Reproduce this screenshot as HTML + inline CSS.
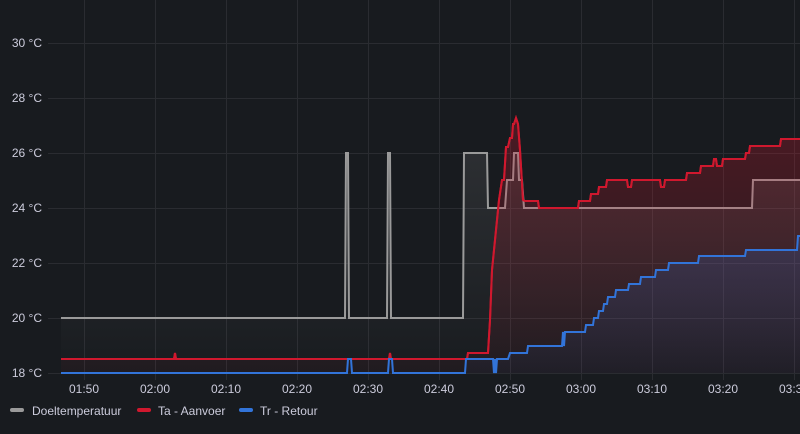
<!DOCTYPE html><html><head><style>
html,body{margin:0;padding:0;background:#181b1f;}
body{width:800px;height:429px;overflow:hidden;font-family:"Liberation Sans",sans-serif;}
svg text{font-family:"Liberation Sans",sans-serif;font-size:12px;fill:#ccccdc;}
</style></head><body>
<svg width="800" height="429" viewBox="0 0 800 429">
<defs>
<linearGradient id="gr" x1="0" y1="0" x2="0" y2="1"><stop offset="0" stop-color="#d0182e" stop-opacity="0.28"/><stop offset="1" stop-color="#d0182e" stop-opacity="0.04"/></linearGradient>
<linearGradient id="gb" x1="0" y1="0" x2="0" y2="1"><stop offset="0" stop-color="#3274d9" stop-opacity="0.2"/><stop offset="1" stop-color="#3274d9" stop-opacity="0.04"/></linearGradient>
<linearGradient id="gg" x1="0" y1="150" x2="0" y2="373" gradientUnits="userSpaceOnUse"><stop offset="0" stop-color="#aaaaaa" stop-opacity="0.14"/><stop offset="0.75" stop-color="#aaaaaa" stop-opacity="0.04"/><stop offset="1" stop-color="#aaaaaa" stop-opacity="0.0"/></linearGradient>
</defs>
<g stroke="#2a2c31" stroke-width="1">
<line x1="48" y1="43.5" x2="800" y2="43.5"/><line x1="48" y1="98.5" x2="800" y2="98.5"/><line x1="48" y1="153.5" x2="800" y2="153.5"/><line x1="48" y1="208.5" x2="800" y2="208.5"/><line x1="48" y1="263.5" x2="800" y2="263.5"/><line x1="48" y1="318.5" x2="800" y2="318.5"/><line x1="48" y1="373.5" x2="800" y2="373.5"/>
<line x1="84.5" y1="0" x2="84.5" y2="380"/><line x1="155.5" y1="0" x2="155.5" y2="380"/><line x1="226.5" y1="0" x2="226.5" y2="380"/><line x1="297.5" y1="0" x2="297.5" y2="380"/><line x1="368.5" y1="0" x2="368.5" y2="380"/><line x1="439.5" y1="0" x2="439.5" y2="380"/><line x1="510.5" y1="0" x2="510.5" y2="380"/><line x1="581.5" y1="0" x2="581.5" y2="380"/><line x1="652.5" y1="0" x2="652.5" y2="380"/><line x1="723.5" y1="0" x2="723.5" y2="380"/><line x1="794.5" y1="0" x2="794.5" y2="380"/>
</g>
<g text-anchor="end">
<text x="42" y="47">30 °C</text><text x="42" y="102">28 °C</text><text x="42" y="157">26 °C</text><text x="42" y="212">24 °C</text><text x="42" y="267">22 °C</text><text x="42" y="322">20 °C</text><text x="42" y="377">18 °C</text>
</g>
<g text-anchor="middle">
<text x="84" y="393">01:50</text><text x="155" y="393">02:00</text><text x="226" y="393">02:10</text><text x="297" y="393">02:20</text><text x="368" y="393">02:30</text><text x="439" y="393">02:40</text><text x="510" y="393">02:50</text><text x="581" y="393">03:00</text><text x="652" y="393">03:10</text><text x="723" y="393">03:20</text><text x="794" y="393">03:30</text>
</g>
<!-- gray -->
<path d="M61,318H345L346,153H348L349,318H387L388,153H390L391,318H463L464,153H487L488,208H505L507,180H513L514,153H518L519,180H522L524,208H752L753,180H800V373H61Z" fill="url(#gg)"/>
<path d="M61,318H345L346,153H348L349,318H387L388,153H390L391,318H463L464,153H487L488,208H505L507,180H513L514,153H518L519,180H522L524,208H752L753,180H800" fill="none" stroke="#9a9a9a" stroke-width="2"/>
<!-- red -->
<path id="r" d="M61,359H174L175,353L176,359H389L390,353L391,359H467L468,353H488L490,320L492,270L495,240L499,200L502,180H504L506,147H508L510,138H512L513,124H514L516,118L518,124L520,150L523,200L525,201H538L539,208H578L579,201H590L591,194H598L599,187H606L607,180H627L628,187H631L632,180H660L661,187H664L665,180H686L687,173H700L701,166H713L714,159H716L717,166H722L723,159H745L746,153H749L750,146H780L781,139H800" fill="none" stroke="#d0182e" stroke-width="2"/>
<path d="M61,359H467L468,353H488L490,320L492,270L495,240L499,200L502,180H504L506,147H508L510,138H512L513,124H514L516,118L518,124L520,150L523,200L525,201H538L539,208H578L579,201H590L591,194H598L599,187H606L607,180H627L628,187H631L632,180H660L661,187H664L665,180H686L687,173H700L701,166H713L714,159H716L717,166H722L723,159H745L746,153H749L750,146H780L781,139H800V373H61Z" fill="url(#gr)"/>
<path d="M61,373H465L466,359H508L510,353H527L528,346H562L563,332H585L586,325H593L594,318H598L599,311H603L604,304H607L608,297H615L616,290H628L629,284H640L641,277H655L656,270H668L669,263H698L699,256H745L746,250H797L798,236H800V373Z" fill="url(#gb)"/>
<use href="#r"/>
<path d="M61,373H347L348,359H351L352,373H388L389,359H392L393,373H465L466,359H493L494,373L495,359L496,373L497,359H508L510,353H527L528,346H562L563,332L564,346L565,332H585L586,325H593L594,318H598L599,311H603L604,304H607L608,297H615L616,290H628L629,284H640L641,277H655L656,270H668L669,263H698L699,256H745L746,250H797L798,236H800" fill="none" stroke="#3274d9" stroke-width="2"/>
<!-- legend -->
<rect x="10" y="408" width="14" height="4" rx="2" fill="#9a9a9a"/><text x="32" y="415">Doeltemperatuur</text>
<rect x="137" y="408" width="14" height="4" rx="2" fill="#d0182e"/><text x="158" y="415">Ta - Aanvoer</text>
<rect x="239" y="408" width="14" height="4" rx="2" fill="#3274d9"/><text x="260" y="415">Tr - Retour</text>
</svg>
</body></html>
